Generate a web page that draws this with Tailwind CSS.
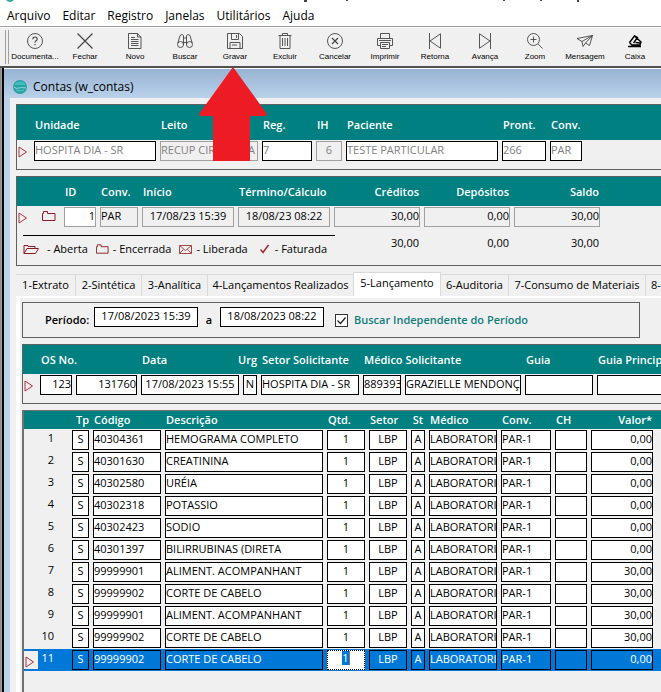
<!DOCTYPE html>
<html lang="pt-BR">
<head>
<meta charset="utf-8">
<meta name="viewport" content="width=device-width, initial-scale=1">
<title>Contas (w_contas)</title>
<script src="https://cdn.jsdelivr.net/npm/@tailwindcss/browser@4"></script>
</head>
<body class="min-h-screen flex flex-col overflow-x-hidden bg-[#f0f0f0] text-black text-[11px] leading-4 font-['Open_Sans','Noto_Sans',sans-serif]">

<header class="bg-white">
  <svg class="block h-1 w-full" aria-hidden="true"><path d="M6 0h8q-4 4-8 0z" fill="#2fa8a6"/><path d="M304 0h3v2h-3zM346 0h2v1h-2zM503 0h2v1h-2zM540 0h2v1h-2zM577 0h2v2h-2z" fill="#444"/></svg>
  <nav class="flex h-[22px] items-center gap-3 pl-[7px] pt-[2px] text-xs" aria-label="Menu">
    <a href="#">Arquivo</a><a href="#">Editar</a><a href="#">Registro</a><a href="#">Janelas</a><a href="#">Utilitários</a><a href="#">Ajuda</a>
  </nav>
</header>

<div id="toolbar" role="toolbar" class="relative flex h-10 shrink-0 overflow-hidden border-t border-[#a0a0a0] bg-[#f0f0f0] pl-[10px] shadow-[inset_0_1px_0_#fff]">
  <span class="absolute left-[5px] top-[3px] h-[34px] w-[4px] border-x border-[#a0a0a0]"></span>
</div>

<div class="relative flex flex-1 border-t-2 border-[#505050] bg-[#b9d1ea]">
  <div class="w-1 shrink-0 border-l border-r-2 border-l-[#8a8a8a] border-r-black bg-[#a0a0a0]"></div>
  <main class="flex min-w-0 flex-1 flex-col border-t border-white">
    <h1 class="flex h-[29px] shrink-0 items-center gap-[6px] bg-linear-to-b from-[#98b3d3] to-[#b9d1ea] pl-[9px] pt-[6px] text-xs">
      <svg width="14" height="14" viewBox="0 0 14 14" aria-hidden="true"><circle cx="7" cy="7" r="7" fill="#27a3a3"/><path d="M2 3q5-3 10 0v2H2z" fill="#45bcbc"/><path d="M1 7q2 2 5 1t7 0" stroke="#8fdcda" fill="none"/><path d="M3 10q4 2 8 0" stroke="#60c8c5" fill="none"/></svg>
      Contas (w_contas)
    </h1>

    <div class="ml-[6px] flex flex-1 flex-col bg-[#f0f0f0] pl-[6px] pt-[6px]">

      <section class="mb-[6px] h-[66px] overflow-hidden border border-r-0 border-[#606060]">
        <table class="w-full table-fixed border-collapse whitespace-nowrap">
          <colgroup><col class="w-[15px]"><col class="w-[126px]"><col class="w-[102px]"><col class="w-[54px]"><col class="w-[30px]"><col class="w-[156px]"><col class="w-[48px]"><col class="w-[36px]"><col></colgroup>
          <thead class="bg-[#008080] text-left text-white">
            <tr class="h-[35px] *:font-semibold"><th></th><th class="px-[3px] pt-[5px]">Unidade</th><th class="px-[3px] pt-[5px]">Leito</th><th class="px-[3px] pt-[5px]">Reg.</th><th class="px-[3px] pt-[5px]">IH</th><th class="px-[3px] pt-[5px]">Paciente</th><th class="px-[3px] pt-[5px]">Pront.</th><th class="px-[3px] pt-[5px]">Conv.</th><th></th></tr>
          </thead>
          <tbody><tr class="h-[22px] text-[#808080]">
            <td class="pl-px pt-[2px]"><svg class="block" width="10" height="12" viewBox="0 0 10 12" fill="none" stroke="#b0303c" aria-hidden="true"><path d="M1 1v10l7.500-5z"/></svg></td>
            <td class="px-[2px]"><input aria-label="Unidade" class="block h-5 w-full border border-black bg-white pb-1" value="HOSPITA DIA - SR"></td>
            <td class="px-[2px]"><input aria-label="Leito" class="block h-5 w-full border border-[#a0a0a0] pb-1" value="RECUP CIRURGICA"></td>
            <td class="px-[2px]"><input aria-label="Reg." class="block h-5 w-full border border-black bg-white pb-1" value="7"></td>
            <td class="px-[2px]"><input aria-label="IH" class="block h-5 w-full border border-[#a0a0a0] pb-1 text-center" value="6"></td>
            <td class="px-[2px]"><input aria-label="Paciente" class="block h-5 w-full border border-black bg-white pb-1" value="TESTE PARTICULAR"></td>
            <td class="px-[2px]"><input aria-label="Pront." class="block h-5 w-full border border-black bg-white pb-1" value="266"></td>
            <td class="px-[2px]"><input aria-label="Conv." class="block h-5 w-full border border-black bg-white pb-1" value="PAR"></td>
            <td></td>
          </tr></tbody>
        </table>
      </section>

      <section class="mb-[6px] h-[90px] overflow-hidden border border-r-0 border-[#606060]">
        <table class="w-full table-fixed border-collapse whitespace-nowrap">
          <colgroup><col class="w-[22px]"><col class="w-[23px]"><col class="w-[36px]"><col class="w-[42px]"><col class="w-[96px]"><col class="w-[96px]"><col class="w-[90px]"><col class="w-[90px]"><col class="w-[90px]"><col></colgroup>
          <thead class="bg-[#008080] text-left text-white">
            <tr class="h-[29px] *:font-semibold"><th></th><th></th><th class="px-[3px]">ID</th><th class="px-[3px]">Conv.</th><th class="px-[3px]">Início</th><th class="px-[3px]">Término/Cálculo</th><th class="px-[3px] text-right">Créditos</th><th class="px-[3px] text-right">Depósitos</th><th class="px-[3px] text-right">Saldo</th><th></th></tr>
          </thead>
          <tbody>
            <tr class="h-[22px]">
              <td class="pl-px pt-[2px]"><svg class="block" width="10" height="12" viewBox="0 0 10 12" fill="none" stroke="#b0303c" aria-hidden="true"><path d="M1 1v10l7.500-5z"/></svg></td>
              <td class="pb-[2px] pl-[3px]"><svg class="block" width="14" height="10" viewBox="0 0 14 10" fill="none" stroke="#8c1c24" aria-hidden="true"><path d="M.5 9.500v-7h1v-2h4v2h7.500v7z"/></svg></td>
              <td class="px-[2px]"><input aria-label="ID" class="block h-5 w-full border border-[#a0a0a0] bg-white pb-1 text-right" value="1"></td>
              <td class="px-[2px]"><input aria-label="Conv." class="block h-5 w-full border border-[#a0a0a0] pb-1" value="PAR"></td>
              <td class="px-[2px]"><input aria-label="Início" class="block h-5 w-full border border-[#a0a0a0] pb-1 text-center" value="17/08/23 15:39"></td>
              <td class="px-[2px]"><input aria-label="Término/Cálculo" class="block h-5 w-full border border-[#a0a0a0] pb-1 text-center" value="18/08/23 08:22"></td>
              <td class="px-[2px]"><input aria-label="Créditos" class="block h-5 w-full border border-[#a0a0a0] pb-1 text-right" value="30,00"></td>
              <td class="px-[2px]"><input aria-label="Depósitos" class="block h-5 w-full border border-[#a0a0a0] pb-1 text-right" value="0,00"></td>
              <td class="px-[2px]"><input aria-label="Saldo" class="block h-5 w-full border border-[#a0a0a0] pb-1 text-right" value="30,00"></td>
              <td></td>
            </tr>
            <tr>
              <td colspan="6" class="pl-[6px] pt-[7px] align-top">
                <div class="flex w-[312px] items-center border-t border-black pt-[5px]">
                  <svg width="16" height="10" viewBox="0 0 16 10" fill="none" stroke="#8c1c24" aria-hidden="true"><path d="M1 9.500v-8h4v1h7v2M1 9.500l3-5h11.500l-3 5z"/></svg><span class="ml-2">- Aberta</span>
                  <svg class="ml-2" width="13" height="10" viewBox="0 0 14 10" fill="none" stroke="#8c1c24" aria-hidden="true"><path d="M.5 9.500v-7h1v-2h4v2h7.500v7z"/></svg><span class="ml-1">- Encerrada</span>
                  <svg class="ml-2" width="13" height="9" viewBox="0 0 13 9" fill="none" stroke="#a8484c" aria-hidden="true"><path d="M.5.5h12v8H.5zl6 5 6-5M.5 8.500l4-4M12.500 8.500l-4-4"/></svg><span class="ml-1">- Liberada</span>
                  <svg class="ml-3" width="9" height="10" viewBox="0 0 9 10" fill="none" stroke="#a0242c" stroke-width="1.500" aria-hidden="true"><path d="M.5 5.500l2.500 3L8.500 1"/></svg><span class="ml-[6px]">- Faturada</span>
                </div>
              </td>
              <td class="px-[3px] pt-[7px] text-right align-top">30,00</td><td class="px-[3px] pt-[7px] text-right align-top">0,00</td><td class="px-[3px] pt-[7px] text-right align-top">30,00</td><td></td>
            </tr>
          </tbody>
        </table>
      </section>

      <div role="tablist" class="flex h-6 shrink-0 items-end overflow-hidden whitespace-nowrap">
        <button role="tab" class="h-[22px] w-[60px] shrink-0 border-r border-t border-[#d9d9d9] pb-px">1-Extrato</button>
        <button role="tab" class="h-[22px] w-[66px] shrink-0 border-r border-t border-[#d9d9d9] pb-px">2-Sintética</button>
        <button role="tab" class="h-[22px] w-[66px] shrink-0 border-r border-t border-[#d9d9d9] pb-px">3-Analítica</button>
        <button role="tab" class="h-[22px] w-[145px] shrink-0 border-t border-[#d9d9d9] pb-px">4-Lançamentos Realizados</button>
        <button role="tab" aria-selected="true" class="h-6 w-[88px] shrink-0 border-x border-t border-[#d9d9d9] bg-white pb-1">5-Lançamento</button>
        <button role="tab" class="h-[22px] w-[68px] shrink-0 border-r border-t border-[#d9d9d9] pb-px">6-Auditoria</button>
        <button role="tab" class="h-[22px] w-[137px] shrink-0 border-r border-t border-[#d9d9d9] pb-px">7-Consumo de Materiais</button>
        <button role="tab" class="h-[22px] flex-1 border-t border-[#d9d9d9] pb-px pl-[5px] text-left">8-</button>
      </div>

      <div role="tabpanel" class="flex min-w-0 flex-1 flex-col border-l-4 border-t-2 border-white pl-[2px] pt-[4px]">
        <form class="mb-[6px] mr-[21px] flex h-9 shrink-0 items-center border border-[#606060] pl-[22px]">
          <label for="ini" class="w-[49px] font-semibold">Período:</label>
          <input id="ini" class="mb-[6px] h-5 w-[104px] border border-black bg-white pb-1 text-center" value="17/08/2023 15:39">
          <label for="fim" class="w-[22px] text-center font-semibold">a</label>
          <input id="fim" class="mb-[6px] h-5 w-[104px] border border-black bg-white pb-1 text-center" value="18/08/2023 08:22">
          <label class="ml-[11px] flex items-center gap-[6px] whitespace-nowrap font-semibold text-[#107c7c]">
            <span class="grid">
              <input type="checkbox" checked class="peer col-start-1 row-start-1 size-[13px] appearance-none border border-[#333] bg-white">
              <svg class="col-start-1 row-start-1 hidden peer-checked:block" width="13" height="13" viewBox="0 0 13 13" fill="none" stroke="#222" stroke-width="1.300" aria-hidden="true"><path d="M2.500 6.500l3 3 5-6"/></svg>
            </span>
            Buscar Independente do Período
          </label>
        </form>

        <section class="mb-[6px] h-[60px] shrink-0 overflow-hidden border border-r-0 border-[#606060]">
          <table class="w-[680px] min-w-full table-fixed border-collapse whitespace-nowrap">
            <colgroup><col class="w-[15px]"><col class="w-[36px]"><col class="w-[65px]"><col class="w-[102px]"><col class="w-[18px]"><col class="w-[102px]"><col class="w-[42px]"><col class="w-[120px]"><col class="w-[72px]"><col></colgroup>
            <thead class="bg-[#008080] text-left text-white">
              <tr class="h-[29px] *:font-semibold"><th></th><th colspan="2" class="px-[3px]">OS No.</th><th class="px-[3px]">Data</th><th><span class="flex justify-end pr-[2px]">Urg</span></th><th class="px-[3px]">Setor Solicitante</th><th colspan="2" class="px-[3px]">Médico Solicitante</th><th class="px-[3px]">Guia</th><th class="px-[3px]">Guia Principal</th></tr>
            </thead>
            <tbody><tr class="h-[22px]">
              <td class="pl-px pt-[2px]"><svg class="block" width="10" height="12" viewBox="0 0 10 12" fill="none" stroke="#b0303c" aria-hidden="true"><path d="M1 1v10l7.500-5z"/></svg></td>
              <td class="px-[2px]"><input aria-label="OS" class="block h-5 w-full border border-black bg-white pb-1 text-right" value="123"></td>
              <td class="px-[2px]"><input aria-label="OS No." class="block h-5 w-full border border-black bg-white pb-1 text-right" value="131760"></td>
              <td class="px-[2px]"><input aria-label="Data" class="block h-5 w-full border border-black bg-white pb-1 text-center" value="17/08/2023 15:55"></td>
              <td class="px-[2px]"><input aria-label="Urg" class="block h-5 w-full border border-black bg-white pb-1 text-center" value="N"></td>
              <td class="px-[2px]"><input aria-label="Setor Solicitante" class="block h-5 w-full border border-black bg-white pb-1" value="HOSPITA DIA - SR"></td>
              <td class="px-[2px]"><input aria-label="Código do médico" class="block h-5 w-full border border-black bg-white pb-1" value="889393"></td>
              <td class="px-[2px]"><input aria-label="Médico Solicitante" class="block h-5 w-full border border-black bg-white pb-1" value="GRAZIELLE MENDONÇA"></td>
              <td class="px-[2px]"><input aria-label="Guia" class="block h-5 w-full border border-black bg-white pb-1"></td>
              <td class="px-[2px]"><input aria-label="Guia Principal" class="block h-5 w-full border border-black bg-white pb-1"></td>
            </tr></tbody>
          </table>
        </section>

        <section class="flex-1 overflow-hidden border-l-2 border-t border-[#707070]">
          <table class="w-full min-w-[637px] table-fixed border-collapse whitespace-nowrap">
            <colgroup><col class="w-[14px]"><col class="w-[32px]"><col class="w-[21px]"><col class="w-[72px]"><col class="w-[162px]"><col class="w-[42px]"><col class="w-[42px]"><col class="w-[18px]"><col class="w-[72px]"><col class="w-[54px]"><col class="w-[36px]"><col class="w-[66px]"><col></colgroup>
            <thead class="bg-[#008080] text-left text-white">
              <tr class="h-[18px] *:font-semibold"><th></th><th></th><th class="pr-[2px] text-right">Tp</th><th class="px-[3px]">Código</th><th class="px-[3px]">Descrição</th><th class="px-[3px]">Qtd.</th><th class="px-[3px]">Setor</th><th class="text-center">St</th><th class="px-[3px]">Médico</th><th class="px-[3px]">Conv.</th><th class="px-[3px]">CH</th><th class="px-[3px] text-right">Valor*</th><th></th></tr>
            </thead>
            <tbody id="itens"></tbody>
          </table>
        </section>
      </div>
    </div>
  </main>

  <svg class="absolute left-[199px] -top-px" width="68" height="94" viewBox="0 0 68 94" aria-hidden="true"><path d="M34 0L68 47 67 49H51V94H14V49H1L0 47z" fill="#ed1c24"/></svg>
</div>

<script>
  const tools = [
    ['Documenta...', '<circle cx="8" cy="8" r="7.500"/><path d="M5.800 6.300q0-2.300 2.200-2.300t2.200 2q0 1-1.200 1.800T8 9.700M8 11v1.300" stroke-width="1.200"/>'],
    ['Fechar', '<path d="M.5.5l15 15M15.500.5l-15 15" stroke-width="1.200"/>'],
    ['Novo', '<path d="M1.500.5h9l3.500 3.500v11.500H1.500zM10.500.5V4H14M4 4.500h4M4 6.500h7.500M4 8.500h7.500M4 10.500h7.500M4 12.500h7.500"/>'],
    ['Buscar', '<circle cx="3.500" cy="11.500" r="3"/><circle cx="12.500" cy="11.500" r="3"/><path d="M.8 10L3 2.500q2-2 3.500 0V12M15.200 10L13 2.500q-2-2-3.500 0V12M6.500 5h3M6.500 9.500h3"/>'],
    ['Gravar', '<path d="M.5.5h12l3 3v12H.5zM4.500.5v6h7v-6M9.500 2v3M3 15.500V9.500h10v6M5 12h5"/>'],
    ['Excluir', '<path d="M1.500 2.500h13M5.500 2.500v-2h5v2M3 2.500v13h10v-13M5.500 5v8M8 5v8M10.500 5v8"/>'],
    ['Cancelar', '<circle cx="8" cy="8" r="7.500"/><path d="M5 5l6 6M11 5l-6 6" stroke-width="1.200"/>'],
    ['Imprimir', '<path d="M3.500 5.500v-5h9v5M3 12.500H.5v-7h15v7H13M3.500 9.500h9v6h-9zM2 7.500h12M5 11.500h6M5 13.500h4"/>'],
    ['Retorna', '<path d="M2.500 0v16M13.500.8v14.400L3 8z"/>'],
    ['Avança', '<path d="M13.500 0v16M2.500.8v14.400L13 8z"/>'],
    ['Zoom', '<circle cx="6.500" cy="6.500" r="6"/><path d="M11 11l4.500 4.500M3.500 6.500h6M6.500 3.500v6"/>'],
    ['Mensagem', '<path d="M0 5.500L15.500 2.500 12.500 12.500 8.500 10 6 13.500 5 8.500zM5 8.500L15.500 2.500 8.500 10"/>'],
    ['Caixa', '<path d="M1 13.500h13M2.500 9.500l5-6.500 3 1.500-4 5.500M7.500 3l6.500 6-1 3H5L2.500 9.500M8.500 9.500l4.500.5" stroke="#000" stroke-width="1.400"/>']
  ];
  document.getElementById('toolbar').insertAdjacentHTML('beforeend', tools.map(([name, art]) =>
    `<button class="flex w-[50px] shrink-0 flex-col items-center pt-[6px]"><svg width="16" height="16" viewBox="0 0 16 16" fill="none" stroke="#444" stroke-width=".9" aria-hidden="true">${art}</svg><span class="mt-[3px] text-[8px] leading-[10px] font-['Liberation_Sans',sans-serif]">${name}</span></button>`).join(''));

  const items = [
    ['40304361', 'HEMOGRAMA COMPLETO', '0,00'], ['40301630', 'CREATININA', '0,00'], ['40302580', 'URÉIA', '0,00'],
    ['40302318', 'POTASSIO', '0,00'], ['40302423', 'SODIO', '0,00'], ['40301397', 'BILIRRUBINAS (DIRETA', '0,00'],
    ['99999901', 'ALIMENT. ACOMPANHANT', '30,00'], ['99999902', 'CORTE DE CABELO', '30,00'],
    ['99999901', 'ALIMENT. ACOMPANHANT', '30,00'], ['99999902', 'CORTE DE CABELO', '30,00'], ['99999902', 'CORTE DE CABELO', '0,00']
  ];
  const marker = '<span class="flex h-[18px] items-center bg-[#f0f0f0] pl-[1px] pt-[3px]"><svg width="10" height="12" viewBox="0 0 10 12" fill="none" stroke="#b0303c" aria-hidden="true"><path d="M1 1v10l7.500-5z"/></svg></span>';
  document.getElementById('itens').innerHTML = items.map(([code, desc, val], i) => {
    const cur = i === items.length - 1;
    const tone = cur ? 'bg-[#0078d7] text-white' : 'bg-white';
    const cell = (label, value, align) =>
      `<td class="px-[2px]"><input aria-label="${label} ${i + 1}" class="block h-5 w-full border border-black pb-1 ${tone} ${align}" value="${value}"></td>`;
    const qty = cur
      ? `<td class="px-[2px]"><div contenteditable="true" role="textbox" aria-label="Qtd. ${i + 1}" class="h-5 border border-dotted border-black bg-white text-center leading-[14px]"><span class="inline-block border-r border-[#777] bg-[#0078d7] text-white">1</span></div></td>`
      : cell('Qtd.', '1', 'text-center');
    return `<tr class="h-[22px] ${cur ? 'bg-[#0078d7] text-white' : ''}"><td>${cur ? marker : ''}</td><td class="pb-1 pr-[2px] text-right"><span class="block pr-[14px]">${i + 1}</span></td>`
      + cell('Tp', 'S', 'text-center') + cell('Código', code, 'text-left') + cell('Descrição', desc, 'text-left') + qty
      + cell('Setor', 'LBP', 'text-center') + cell('St', 'A', 'text-center') + cell('Médico', 'LABORATORIO', 'text-left')
      + cell('Conv.', 'PAR-1', 'text-left') + cell('CH', '', 'text-left') + cell('Valor', val, 'text-right') + '<td></td></tr>';
  }).join('');
</script>
</body>
</html>
